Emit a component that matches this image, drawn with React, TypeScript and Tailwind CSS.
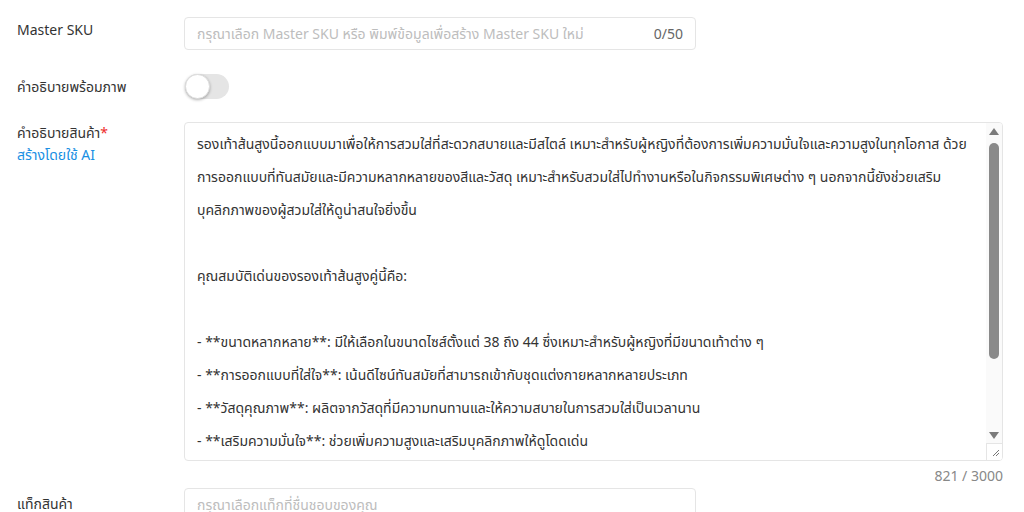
import React from "react";

const description = `รองเท้าส้นสูงนี้ออกแบบมาเพื่อให้การสวมใส่ที่สะดวกสบายและมีสไตล์ เหมาะสำหรับผู้หญิงที่ต้องการเพิ่มความมั่นใจและความสูงในทุกโอกาส ด้วยการออกแบบที่ทันสมัยและมีความหลากหลายของสีและวัสดุ เหมาะสำหรับสวมใส่ไปทำงานหรือในกิจกรรมพิเศษต่าง ๆ นอกจากนี้ยังช่วยเสริมบุคลิกภาพของผู้สวมใส่ให้ดูน่าสนใจยิ่งขึ้น

คุณสมบัติเด่นของรองเท้าส้นสูงคู่นี้คือ:

- **ขนาดหลากหลาย**: มีให้เลือกในขนาดไซส์ตั้งแต่ 38 ถึง 44 ซึ่งเหมาะสำหรับผู้หญิงที่มีขนาดเท้าต่าง ๆ
- **การออกแบบที่ใส่ใจ**: เน้นดีไซน์ทันสมัยที่สามารถเข้ากับชุดแต่งกายหลากหลายประเภท
- **วัสดุคุณภาพ**: ผลิตจากวัสดุที่มีความทนทานและให้ความสบายในการสวมใส่เป็นเวลานาน
- **เสริมความมั่นใจ**: ช่วยเพิ่มความสูงและเสริมบุคลิกภาพให้ดูโดดเด่น

ไม่ว่าจะเป็นการไปทำงาน งานเลี้ยง หรือโอกาสพิเศษ รองเท้าส้นสูงคู่นี้จะช่วยให้คุณดูดีและมั่นใจในทุกก้าว`;

const font = '"Noto Sans", "Noto Sans Thai", "Noto Sans Thai UI", sans-serif';

function Label({ children }: { children: React.ReactNode }) {
  return <div className="w-[184px] shrink-0 pl-[17px] text-[14px] text-[#333]">{children}</div>;
}

function Arrow({ up }: { up?: boolean }) {
  return (
    <div className="flex h-[16px] items-center justify-center">
      <svg width="10" height="7" viewBox="0 0 10 7">
        {up ? <path d="M5 0 L10 7 L0 7 Z" fill="#7b7b7b" /> : <path d="M0 0 L10 0 L5 7 Z" fill="#7b7b7b" />}
      </svg>
    </div>
  );
}

export default function App() {
  return (
    <div className="w-[1024px] h-[512px] overflow-hidden bg-white pt-[17px]" style={{ fontFamily: font }}>
      {/* Master SKU */}
      <div className="flex items-center">
        <Label>
          <span className="relative -top-[4px]">Master SKU</span>
        </Label>
        <div className="flex h-[33px] w-[512px] items-center justify-between rounded-[4px] border border-[#e5e5e5] px-[12px] text-[14px]">
          <span className="text-[#bdbdbd]">กรุณาเลือก Master SKU หรือ พิมพ์ข้อมูลเพื่อสร้าง Master SKU ใหม่</span>
          <span className="text-[#666]">0/50</span>
        </div>
      </div>

      {/* Toggle */}
      <div className="mt-[24px] flex items-center">
        <Label>คำอธิบายพร้อมภาพ</Label>
        <button className="relative ml-[1px] h-[25px] w-[44px] rounded-full bg-[#e5e5e5]">
          <span className="absolute left-0 top-0 h-[25px] w-[25px] rounded-full border border-[#ddd] bg-white shadow-[0_1px_3px_rgba(0,0,0,0.3)]" />
        </button>
      </div>

      {/* Description */}
      <div className="mt-[23px] flex items-start">
        <div className="-mt-[1px] w-[184px] shrink-0 pl-[17px] text-[14px] leading-[23px]">
          <div className="text-[#333]">
            คำอธิบายสินค้า<span className="text-[#ee2c2c]">*</span>
          </div>
          <div className="-mt-[1px] text-[#1a8fe3]">สร้างโดยใช้ AI</div>
        </div>
        <div className="w-[819px]">
          <div className="flex h-[339px] overflow-hidden rounded-[4px] border border-[#e5e5e5]">
            <textarea
              readOnly
              value={description}
              className="block h-full flex-1 resize-none overflow-hidden px-[12px] pt-[4px] text-[14px] leading-[33px] text-[#333] outline-none"
              style={{ fontFamily: font }}
            />
            <div className="flex w-[16px] shrink-0 flex-col bg-[#fafafa]">
              <Arrow up />
              <div className="flex-1 px-[3px]">
                <div className="mt-[4px] h-[216px] w-[10px] rounded-full bg-[#8a8a8a]" />
              </div>
              <Arrow />
              <div className="flex h-[17px] items-center justify-center border-l border-t border-[#e5e5e5] bg-white">
                <svg width="10" height="10" viewBox="0 0 10 10">
                  <path d="M9 3 L3 9 M9 6 L6 9" stroke="#777" strokeWidth="1" />
                </svg>
              </div>
            </div>
          </div>
          <div className="mt-[4px] text-right text-[14px] leading-[22px] text-[#888]">821 / 3000</div>
        </div>
      </div>

      {/* Tags */}
      <div className="mt-[1px] flex items-start">
        <Label>
          <span className="relative top-[5px]">แท็กสินค้า</span>
        </Label>
        <div className="flex h-[33px] w-[512px] items-center rounded-[4px] border border-[#e5e5e5] px-[12px] text-[14px]">
          <span className="text-[#bdbdbd]">กรุณาเลือกแท็กที่ชื่นชอบของคุณ</span>
        </div>
      </div>
    </div>
  );
}
